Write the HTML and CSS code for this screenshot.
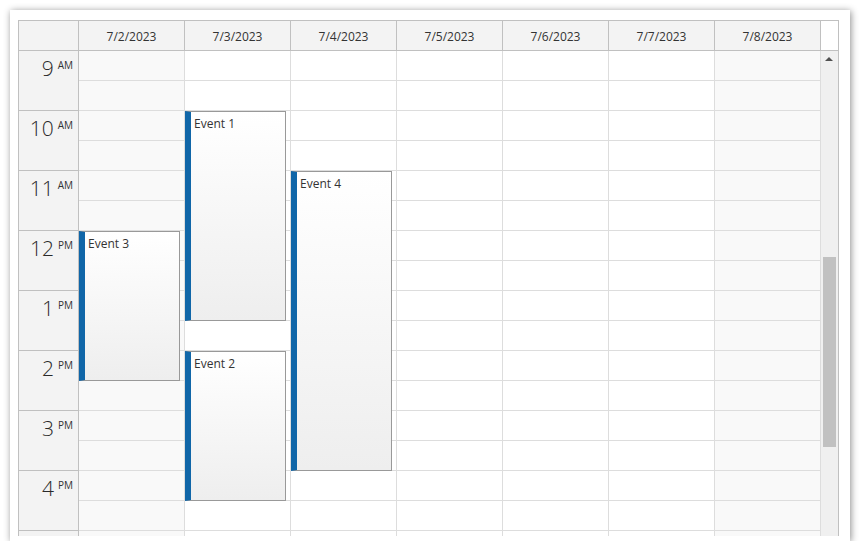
FILE: index.html
```html
<!DOCTYPE html>
<html>
<head>
<meta charset="utf-8">
<link rel="stylesheet" href="styles.css">
</head>
<body>
<div class="panel">
  <div class="calendar">
    <div class="header">
      <div class="corner"></div>
      <div class="hcell">7/2/2023</div>
      <div class="hcell">7/3/2023</div>
      <div class="hcell">7/4/2023</div>
      <div class="hcell">7/5/2023</div>
      <div class="hcell">7/6/2023</div>
      <div class="hcell">7/7/2023</div>
      <div class="hcell">7/8/2023</div>
      <div class="scorner"></div>
    </div>
    <div class="body">
      <div class="rowheader">
        <div class="hour"><span class="num">9</span><span class="ampm">AM</span></div>
        <div class="hour"><span class="num">10</span><span class="ampm">AM</span></div>
        <div class="hour"><span class="num">11</span><span class="ampm">AM</span></div>
        <div class="hour"><span class="num">12</span><span class="ampm">PM</span></div>
        <div class="hour"><span class="num">1</span><span class="ampm">PM</span></div>
        <div class="hour"><span class="num">2</span><span class="ampm">PM</span></div>
        <div class="hour"><span class="num">3</span><span class="ampm">PM</span></div>
        <div class="hour"><span class="num">4</span><span class="ampm">PM</span></div>
        <div class="hour"></div>
      </div>
      <div class="col weekend">
        <div class="c"></div><div class="c"></div><div class="c"></div><div class="c"></div><div class="c"></div><div class="c"></div><div class="c"></div><div class="c"></div><div class="c"></div><div class="c"></div><div class="c"></div><div class="c"></div><div class="c"></div><div class="c"></div><div class="c"></div><div class="c"></div><div class="c"></div>
        <div class="event ev3"><span class="etext">Event 3</span></div>
      </div>
      <div class="col">
        <div class="c"></div><div class="c"></div><div class="c"></div><div class="c"></div><div class="c"></div><div class="c"></div><div class="c"></div><div class="c"></div><div class="c"></div><div class="c"></div><div class="c"></div><div class="c"></div><div class="c"></div><div class="c"></div><div class="c"></div><div class="c"></div><div class="c"></div>
        <div class="event ev1"><span class="etext">Event 1</span></div>
        <div class="event ev2"><span class="etext">Event 2</span></div>
      </div>
      <div class="col">
        <div class="c"></div><div class="c"></div><div class="c"></div><div class="c"></div><div class="c"></div><div class="c"></div><div class="c"></div><div class="c"></div><div class="c"></div><div class="c"></div><div class="c"></div><div class="c"></div><div class="c"></div><div class="c"></div><div class="c"></div><div class="c"></div><div class="c"></div>
        <div class="event ev4"><span class="etext">Event 4</span></div>
      </div>
      <div class="col">
        <div class="c"></div><div class="c"></div><div class="c"></div><div class="c"></div><div class="c"></div><div class="c"></div><div class="c"></div><div class="c"></div><div class="c"></div><div class="c"></div><div class="c"></div><div class="c"></div><div class="c"></div><div class="c"></div><div class="c"></div><div class="c"></div><div class="c"></div>
      </div>
      <div class="col">
        <div class="c"></div><div class="c"></div><div class="c"></div><div class="c"></div><div class="c"></div><div class="c"></div><div class="c"></div><div class="c"></div><div class="c"></div><div class="c"></div><div class="c"></div><div class="c"></div><div class="c"></div><div class="c"></div><div class="c"></div><div class="c"></div><div class="c"></div>
      </div>
      <div class="col">
        <div class="c"></div><div class="c"></div><div class="c"></div><div class="c"></div><div class="c"></div><div class="c"></div><div class="c"></div><div class="c"></div><div class="c"></div><div class="c"></div><div class="c"></div><div class="c"></div><div class="c"></div><div class="c"></div><div class="c"></div><div class="c"></div><div class="c"></div>
      </div>
      <div class="col weekend">
        <div class="c"></div><div class="c"></div><div class="c"></div><div class="c"></div><div class="c"></div><div class="c"></div><div class="c"></div><div class="c"></div><div class="c"></div><div class="c"></div><div class="c"></div><div class="c"></div><div class="c"></div><div class="c"></div><div class="c"></div><div class="c"></div><div class="c"></div>
      </div>
      <div class="scrollbar">
        <div class="arrow"></div>
        <div class="thumb"></div>
      </div>
    </div>
  </div>
</div>
</body>
</html>
```

FILE: styles.css
```css
html, body {
  margin: 0;
  padding: 0;
  background: #ffffff;
}

body {
  font-family: "Open Sans", "Noto Sans", "Liberation Sans", sans-serif;
  color: #333333;
}

.panel {
  margin: 10px 0 0 10px;
  width: 840px;
  height: 531px;
  box-sizing: border-box;
  padding: 10px 11px 5px 8px;
  background: #ffffff;
  box-shadow: 1px 1px 7px rgba(0, 0, 0, 0.45);
}

.calendar {
  width: 821px;
  height: 516px;
  box-sizing: border-box;
  border: 1px solid #c0c0c0;
  border-bottom: none;
  overflow: hidden;
  display: flex;
  flex-direction: column;
}

.header {
  display: flex;
  height: 30px;
  flex: none;
}

.corner {
  width: 60px;
  box-sizing: border-box;
  background: #f3f3f3;
  border-right: 1px solid #c0c0c0;
  border-bottom: 1px solid #c0c0c0;
}

.hcell {
  width: 106px;
  box-sizing: border-box;
  background: #f3f3f3;
  border-right: 1px solid #c0c0c0;
  border-bottom: 1px solid #c0c0c0;
  font-size: 12px;
  line-height: 31px;
  text-align: center;
  color: #333333;
  overflow: hidden;
}

.scorner {
  width: 17px;
  box-sizing: border-box;
  background: #ffffff;
  border-bottom: 1px solid #c0c0c0;
}

.body {
  display: flex;
  flex: 1;
  overflow: hidden;
}

.rowheader {
  width: 60px;
  flex: none;
  box-sizing: border-box;
  background: #f3f3f3;
  border-right: 1px solid #c0c0c0;
}

.hour {
  height: 60px;
  box-sizing: border-box;
  border-bottom: 1px solid #c0c0c0;
  text-align: right;
  padding: 5px 5px 0 0;
  line-height: 24px;
  white-space: nowrap;
}

.num {
  font-size: 21px;
  font-weight: 300;
  color: #2a2a2a;
  vertical-align: top;
}

.ampm {
  font-size: 10px;
  line-height: 14px;
  color: #333333;
  vertical-align: top;
  margin-left: 4px;
  position: relative;
  top: 2px;
}

.col {
  width: 106px;
  flex: none;
  box-sizing: border-box;
  border-right: 1px solid #dddddd;
  background: #ffffff;
  position: relative;
}

.col.weekend {
  background: #f9f9f9;
}

.c {
  height: 30px;
  box-sizing: border-box;
  border-bottom: 1px solid #dddddd;
}

.event {
  position: absolute;
  left: 0;
  width: 101px;
  box-sizing: border-box;
  border: 1px solid #999999;
  border-left: 6px solid #1066a8;
  background: linear-gradient(to bottom, #ffffff 0%, #eeeeee 100%);
  padding: 4px 0 0 3px;
  font-size: 12px;
  line-height: 16px;
  color: #333333;
  overflow: hidden;
}

.ev3 { top: 180px; height: 150px; }
.ev1 { top: 60px; height: 210px; }
.ev2 { top: 300px; height: 150px; }
.ev4 { top: 120px; height: 300px; }

.scrollbar {
  width: 17px;
  flex: none;
  background: #f0f0f0;
  position: relative;
}

.arrow {
  position: absolute;
  left: 4px;
  top: 6px;
  width: 0;
  height: 0;
  border-left: 4px solid transparent;
  border-right: 4px solid transparent;
  border-bottom: 4px solid #505050;
}

.thumb {
  position: absolute;
  left: 2px;
  top: 206px;
  width: 13px;
  height: 190px;
  background: #c1c1c1;
}
```
